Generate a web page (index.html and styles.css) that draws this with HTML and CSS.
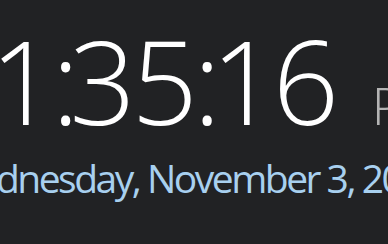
FILE: index.html
```html
<!DOCTYPE html>
<html>
<head>
<meta charset="utf-8">
<link rel="stylesheet" href="styles.css">
</head>
<body>
<div class="flyout">
  <div class="time"><span class="hms">11<span class="colon">:</span>35<span class="colon">:</span>16</span><span class="ampm">PM</span></div>
  <div class="date">Wednesday, November 3, 2021</div>
</div>
</body>
</html>
```
FILE: styles.css
```css
html, body {
  margin: 0;
  padding: 0;
  width: 388px;
  height: 244px;
  overflow: hidden;
  background: #212224;
}
.flyout {
  display: flex;
  flex-direction: column;
  padding-top: 20px;
  white-space: nowrap;
}
.time {
  display: flex;
  align-items: baseline;
  gap: 37px;
  margin-left: -72px;
  height: 120px;
  line-height: 120px;
  font-family: "Open Sans", "Noto Sans", sans-serif;
  font-weight: 300;
}
.hms {
  font-size: 116px;
  letter-spacing: -4.3px;
  color: #ffffff;
}
.colon {
  letter-spacing: -10px;
}
.ampm {
  font-size: 52px;
  color: #b4b4b4;
}
.date {
  margin-top: 16px;
  margin-left: -57px;
  font-family: "Open Sans", "Noto Sans", sans-serif;
  font-weight: 400;
  font-size: 39px;
  letter-spacing: -2.5px;
  line-height: 44px;
  color: #a8d0ef;
}
```
